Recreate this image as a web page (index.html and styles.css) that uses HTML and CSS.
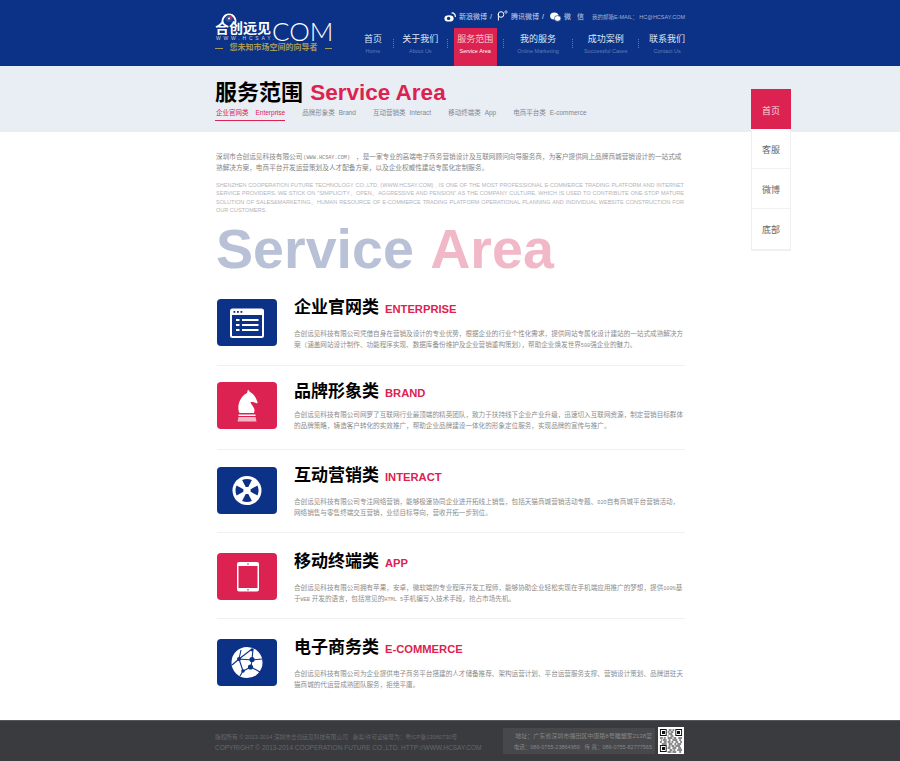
FILE: index.html
```html
<!DOCTYPE html>
<html lang="zh-CN">
<head>
  <meta charset="UTF-8" />
  <title>服务范围 Service Area</title>
  <link rel="stylesheet" href="styles.css">
</head>
<body>
  <header class="top">
    <div class="top-inner">
      <a class="logo">
        <svg class="logo-mark" width="20" height="12" viewBox="0 0 20 12">
          <path d="M4 11.500a6.500 6.500 0 1 1 12 0" fill="none" stroke="#fff" stroke-width="1.800"/>
          <circle cx="10" cy="6.500" r="3.600" fill="#2a4f9e"/>
          <path d="M10 3a3.500 3.500 0 0 1 3.500 3.500H10z" fill="#d9214f"/>
          <circle cx="10" cy="6.500" r="1" fill="#fff"/>
        </svg>
        <div class="logo-main"><span class="logo-cn">合创远见</span><span class="logo-com">COM</span></div>
        <div class="logo-url">WWW.HCSAY.</div>
        <div class="logo-slogan"><i></i>您未知市场空间的向导者<i></i></div>
      </a>
      <div class="top-right">
        <div class="top-links">
          <svg class="ic" width="12" height="10" viewBox="0 0 12 10"><ellipse cx="5" cy="6.400" rx="4.600" ry="3.200" fill="#fff"/><circle cx="4.600" cy="6.400" r="1.700" fill="#0b3286"/><path d="M7.500 1a3.400 3.400 0 0 1 3.800 4" fill="none" stroke="#fff" stroke-width="1.200"/></svg>
          <span class="tl-w">新浪微博</span><em>/</em>
          <svg class="ic ic-qq" width="11" height="11" viewBox="0 0 11 11"><circle cx="4" cy="4.500" r="2.800" fill="none" stroke="#fff"/><path d="M1.400 4v6.500" stroke="#fff"/><circle cx="9" cy="2" r="1.200" fill="none" stroke="#fff" stroke-width=".7"/></svg>
          <span class="tl-w">腾讯微博</span><em>/</em>
          <svg class="ic ic-wx" width="11" height="10" viewBox="0 0 11 10"><ellipse cx="4.300" cy="4" rx="4.200" ry="3.500" fill="#fff"/><ellipse cx="7.600" cy="6.400" rx="3.300" ry="2.800" fill="#fff" stroke="#0b3286" stroke-width=".6"/></svg>
          <span class="tl-wx">微 信</span>
          <span class="tl-mail">我的邮箱E-MAIL： HC@HCSAY.COM</span>
        </div>
        <nav class="nav">
          <a class="nav-item w40"><b>首页</b><small>Home</small></a><i class="sep"></i>
          <a class="nav-item w53"><b>关于我们</b><small>About Us</small></a><i class="sep"></i>
          <a class="nav-item w43 on"><b>服务范围</b><small>Service Area</small></a><i class="sep sep-r"></i>
          <a class="nav-item w69"><b>我的服务</b><small>Online Marketing</small></a><i class="sep"></i>
          <a class="nav-item w65"><b>成功案例</b><small>Successful Cases</small></a><i class="sep"></i>
          <a class="nav-item w56"><b>联系我们</b><small>Contact Us</small></a>
        </nav>
      </div>
    </div>
  </header>

  <section class="band">
    <div class="wrap">
      <h1 class="band-title">服务范围 <span>Service Area</span></h1>
      <ul class="sub">
        <li class="on">企业官网类<span>Enterprise</span></li>
        <li>品牌形象类<span class="s4">Brand</span></li>
        <li>互动营销类<span class="s4">Interact</span></li>
        <li>移动终端类<span class="s4">App</span></li>
        <li>电商平台类<span class="s4">E-commerce</span></li>
      </ul>
    </div>
  </section>

  <aside class="side">
    <a class="on">首页</a>
    <a>客服</a>
    <a>微博</a>
    <a>底部</a>
  </aside>

  <main class="wrap main">
    <p class="intro-cn">深圳市合创远见科技有限公司<span class="url">(WWW.HCSAY.COM)</span>，是一家专业的高端电子商务营销设计及互联网顾问向导服务商，为客户提供网上品牌商城营销设计的一站式成<br>熟解决方案，电商平台开发运营策划及人才配备方案，以及企业权威性建站专属化定制服务。</p>
    <p class="intro-en">
      <span>SHENZHEN COOPERATION FUTURE TECHNOLOGY CO.,LTD. (WWW.HCSAY.COM) , IS ONE OF THE MOST PROFESSIONAL E-COMMERCE TRADING PLATFORM AND INTERNET</span>
      <span>SERVICE PROVIDERS. WE STICK ON "SIMPLICITY、OPEN、AGGRESSIVE AND PENSION" AS THE COMPANY CULTURE, WHICH IS USED TO CONTRIBUTE ONE-STOP MATURE</span>
      <span>SOLUTION OF SALES&amp;MARKETING、HUMAN RESOURCE OF E-COMMERCE TRADING PLATFORM OPERATIONAL PLANNING AND INDIVIDUAL WEBSITE CONSTRUCTION FOR</span>
      <span class="last">OUR CUSTOMERS.</span>
    </p>
    <div class="big">Service <span>Area</span></div>

    <div class="svc">
      <div class="svc-icon blue">
        <svg width="60" height="47" viewBox="0 0 60 47"><rect x="14" y="10.500" width="32" height="27.500" rx="1.500" fill="none" stroke="#fff" stroke-width="2"/><rect x="14" y="10" width="32" height="6" fill="#fff"/><g fill="#0b3286"><rect x="16.500" y="12" width="1.800" height="1.800"/><rect x="20" y="12" width="1.800" height="1.800"/><rect x="23.500" y="12" width="1.800" height="1.800"/></g><g fill="#fff"><rect x="19" y="20" width="3.500" height="2"/><rect x="19" y="25" width="3.500" height="2"/><rect x="19" y="30" width="3.500" height="2"/><rect x="25" y="20" width="16.500" height="2"/><rect x="25" y="25" width="16.500" height="2"/><rect x="25" y="30" width="16.500" height="2"/></g></svg>
      </div>
      <div class="svc-body">
        <h2>企业官网类<span>ENTERPRISE</span></h2>
        <p>合创远见科技有限公司凭借自身在营销及设计的专业优势，根据企业的行业个性化需求，提供网站专属化设计建站的一站式成熟解决方<br>案（涵盖网站设计制作、功能程序实现、数据库备份维护及企业营销重构策划），帮助企业焕发世界<span class="num">500</span>强企业的魅力。</p>
      </div>
    </div>

    <div class="svc svc-brand">
      <div class="svc-icon red">
        <svg width="60" height="47" viewBox="0 0 60 47"><path d="M22.500 31c-1.500-3-1.500-7-.500-10 1-4 4-8 8-10l1-3.500 2 2.500c4 2 6 6 7.500 10 .3 1-.3 1.500-1 1.300l-3.500-1.300-2.500 0c.5 3 4 5 4 8 0 1-.2 2-.5 3z" fill="#fff"/><path d="M21.500 32.500h17v1.500h-17z" fill="#fff"/><path d="M21.500 35h17l1 4.500h-19z" fill="#f3b7c6"/></svg>
      </div>
      <div class="svc-body">
        <h2>品牌形象类<span>BRAND</span></h2>
        <p>合创远见科技有限公司网罗了互联网行业最顶端的精英团队，致力于扶持线下企业产业升级，迅速切入互联网资源，制定营销目标群体<br>的品牌策略，铸造客户转化的实效推广，帮助企业品牌建设一体化的形象定位服务，实现品牌的宣传与推广。</p>
      </div>
    </div>

    <div class="svc">
      <div class="svc-icon blue">
        <svg width="60" height="47" viewBox="0 0 60 47"><circle cx="30" cy="23.500" r="14.500" fill="#fff"/><g fill="#0b3286"><path d="M25.100 13.100A11.500 11.500 0 0 1 34.900 13.100L31.300 19.900H28.700Z"/><path d="M25.100 13.100A11.500 11.500 0 0 1 34.900 13.100L31.300 19.900H28.700Z" transform="rotate(90 30 23.500)"/><path d="M25.100 13.100A11.500 11.500 0 0 1 34.900 13.100L31.300 19.900H28.700Z" transform="rotate(180 30 23.500)"/><path d="M25.100 13.100A11.500 11.500 0 0 1 34.900 13.100L31.300 19.900H28.700Z" transform="rotate(270 30 23.500)"/></g></svg>
      </div>
      <div class="svc-body">
        <h2>互动营销类<span>INTERACT</span></h2>
        <p>合创远见科技有限公司专注网络营销，能够极速协同企业进开拓线上销售，包括天猫商城营销活动专题、<span class="num">O2O</span>自有商城平台营销活动，<br>网络销售与零售终端交互营销，业绩目标导向，营收开拓一步到位。</p>
      </div>
    </div>

    <div class="svc">
      <div class="svc-icon red">
        <svg width="60" height="47" viewBox="0 0 60 47"><rect x="20" y="9" width="22" height="29.500" rx="2" fill="#fff"/><rect x="21.500" y="13" width="19" height="22" fill="#dc2250"/><circle cx="31" cy="11" r=".8" fill="#dc2250"/><circle cx="31" cy="36.700" r=".8" fill="#dc2250"/></svg>
      </div>
      <div class="svc-body">
        <h2>移动终端类<span>APP</span></h2>
        <p>合创远见科技有限公司拥有苹果，安卓，微软端的专业程序开发工程师，能够协助企业轻松实现在手机端应用推广的梦想，提供<span class="num">100%</span>基<br>于<span class="num">WEB</span> 开发的语言，包括常见的<span class="num">HTML 5</span>手机编写入技术手段，抢占市场先机。</p>
      </div>
    </div>

    <div class="svc">
      <div class="svc-icon blue">
        <svg width="60" height="47" viewBox="0 0 60 47"><circle cx="30" cy="23.500" r="15.500" fill="#fff"/><g fill="none" stroke="#0b3286" stroke-width="1.100"><path d="M22 20l13-10M22 20l4 12M22 20l13 1M35 10l1 0M36 10l-1 11M35 21l-1 7M26 32l8-4M34 28l9 5M15 26l7-6M35 21l10-1M24 11l-2 9M26 32l-3 5"/></g><g fill="#0b3286"><circle cx="22" cy="20" r="2"/><circle cx="35" cy="20.500" r="2.600"/><circle cx="33.500" cy="28" r="2.600"/><circle cx="26" cy="32" r="1.800"/><circle cx="35" cy="11" r="1.400"/></g></svg>
      </div>
      <div class="svc-body">
        <h2>电子商务类<span>E-COMMERCE</span></h2>
        <p>合创远见科技有限公司为企业提供电子商务平台搭建的人才储备推荐、架构运营计划、平台运营服务支撑、营销设计策划、品牌进驻天<br>猫商城的代运营成熟团队服务，拒绝平庸。</p>
      </div>
    </div>
  </main>

  <footer class="foot">
    <div class="foot-inner">
      <div class="foot-left">
        <p class="foot-cn">版权所有 © 2013-2014 深圳市合创远见科技有限公司 &nbsp; 备案/许可证编号为：粤ICP备13060730号</p>
        <p class="foot-en">COPYRIGHT © 2013-2014 COOPERATION FUTURE CO.,LTD. HTTP://WWW.HCSAY.COM</p>
      </div>
      <div class="foot-contact">
        <p>地址：广东省深圳市福田区中康路8号雕塑家2138室</p>
        <p class="tel">电话：086-0755-23864959 &nbsp; 传 真：086-0755-82777565</p>
      </div>
      <svg class="qr" width="26" height="27" viewBox="0 0 27 27" preserveAspectRatio="none" shape-rendering="crispEdges">
        <rect width="27" height="27" fill="#fff"/>
        <g fill="none" stroke="#111">
          <rect x="2.500" y="2.500" width="6" height="6"/><rect x="18.500" y="2.500" width="6" height="6"/><rect x="2.500" y="18.500" width="6" height="6"/>
        </g>
        <g fill="#111">
          <rect x="4" y="4" width="3" height="3"/><rect x="20" y="4" width="3" height="3"/><rect x="4" y="20" width="3" height="3"/>
        </g>
        <path stroke="#111" d="M11 3h3M15 3h2M10 5h2M13 5h3M11 7h4M10 9h1M13 9h3M2 11h3M6 11h2M10 11h5M16 11h3M21 11h4M3 13h1M5 13h4M11 13h2M15 13h5M22 13h2M2 15h2M6 15h3M10 15h3M14 15h2M18 15h3M23 15h2M4 17h5M11 17h4M17 17h2M20 17h4M11 19h2M14 19h3M18 19h5M10 21h3M15 21h4M21 21h3M12 23h3M16 23h2M20 23h5M10 25h4M15 25h4M22 25h2"/>
      </svg>
    </div>
  </footer>
</body>
</html>
```

FILE: styles.css
```css
:root {
  --blue: #0b3286;
  --red: #dc2250;
  --band: #e9edf4;
  --dark: #3a3b3f;
}
* { margin: 0; padding: 0; box-sizing: border-box; }
body {
  background: #fff;
  color: #8a8a8a;
  font-family: 'Liberation Sans', 'Noto Sans CJK SC', sans-serif;
  position: relative;
  height: 761px;
  overflow: hidden;
}
.wrap { width: 470px; margin-left: 215px; }

/* header */
.top { background: var(--blue); height: 66px; }
.top-inner { display: flex; padding-left: 215px; }
.logo { display: block; width: 138px; padding-top: 12px; color: #fff; }
.logo-mark { display: block; margin-left: 4px; margin-bottom: -5px; }
.logo-main { display: flex; align-items: center; height: 23px; }
.logo-cn { font-size: 14px; font-weight: 700; width: 57px; white-space: nowrap; margin-top: -7px; }
.logo-com { font-family: 'Lato', sans-serif; font-weight: 300; font-size: 26px; }
.logo-url { font-size: 5px; letter-spacing: 2.800px; color: #c9d3e8; line-height: 5px; margin-top: -6px; padding-left: 1px; white-space: nowrap; }
.logo-slogan {
  display: flex;
  align-items: center;
  width: 117px;
  gap: 7px;
  color: #a9975a;
  font-size: 8px;
  font-weight: 700;
  line-height: 10px;
  margin-top: 2px;
  white-space: nowrap;
}
.logo-slogan i { flex: 1; height: 1px; background: #a9975a; }

.top-right { width: 342px; }
.top-links {
  height: 28px;
  padding: 12px 0 0 91px;
  display: flex;
  align-items: flex-start;
  font-size: 7px;
  line-height: 10px;
  color: #c6d1e6;
  white-space: nowrap;
}
.top-links .ic { display: block; margin-right: 3px; }
.top-links em { font-style: normal; width: 10px; text-align: center; margin-left: -1px; color: #dbe2f0; }
.ic-qq { margin-top: -2px; margin-left: 1px; }
.ic-wx { margin-left: 2px; }
.tl-w { width: 28px; }
.tl-wx { font-size: 7px; word-spacing: 4px; width: 28px; }
.tl-mail { font-size: 5.500px; color: #9fb0d2; }

.nav { display: flex; height: 38px; align-items: flex-start; }
.nav-item { display: block; text-align: center; padding-top: 6px; color: #dfe6f3; white-space: nowrap; }
.nav-item b { display: block; font-weight: 400; font-size: 9px; line-height: 11px; }
.nav-item small { display: block; font-size: 5.500px; line-height: 8px; margin-top: 2px; color: #5f7cb6; }
.nav-item.on { background: var(--red); height: 38px; margin-left: 6px; color: #f4c9d4; }
.nav-item.on small { color: #fff; }
.w40 { width: 40px; }
.w53 { width: 53px; }
.w43 { width: 43px; }
.w69 { width: 69px; }
.w65 { width: 65px; }
.w56 { width: 56px; }
.sep { display: block; width: 1px; height: 9px; margin-top: 11px; border-left: 1px dotted #5f7cb6; }
.sep-r { margin-left: 6px; }

/* title band */
.band { background: var(--band); height: 66px; }
.band .wrap { padding-top: 14px; }
.band-title {
  font-size: 22px;
  line-height: 26px;
  color: #000;
  white-space: nowrap;
}
.band-title span { color: var(--red); font-size: 22.500px; margin-left: 1px; }
.sub { display: flex; list-style: none; gap: 16px; font-size: 6.500px; line-height: 9px; color: #85888e; }
.sub li { padding: 2px 0 3px 1px; white-space: nowrap; }
.sub li span { margin-left: 7px; font-size: 6.500px; }
.sub li span.s4 { margin-left: 4px; }
.sub li.on { color: var(--red); border-bottom: 1px solid var(--red); }

/* right hand quick menu */
.side {
  position: absolute;
  left: 751px;
  top: 89px;
  width: 40px;
  background: #fff;
  border: 1px solid #eeeff2;
  border-top: 0;
  font-size: 9px;
  color: #666;
}
.side a { display: block; height: 40px; line-height: 42px; text-align: center; border-bottom: 1px solid #f1f1f3; }
.side a:last-child { height: 41px; }
.side a.on { background: var(--red); color: #fbdde4; height: 40px; margin: 0 -1px; line-height: 44px; border: 0; }

/* content */
.main { height: 588px; padding: 19px 0 0 1px; }
.intro-cn { font-size: 6.650px; line-height: 11px; color: #858585; white-space: nowrap; }
.url { font-family: 'Liberation Mono', monospace; font-size: 5.200px; line-height: 0; margin: 0 6px 0 1px; }
.intro-en { font-size: 5.550px; line-height: 8.350px; color: #b3b5ba; margin-top: 8px; width: 468px; }
.intro-en span { display: block; white-space: nowrap; text-align: justify; text-align-last: justify; }
.intro-en span.last { text-align-last: left; }
.big {
  font-size: 55.600px;
  font-weight: 700;
  line-height: 57px;
  word-spacing: 3px;
  color: #b9c1d7;
  margin-top: 7px;
  white-space: nowrap;
}
.big span { color: #f1b9c8; }

.svc { display: flex; gap: 17px; margin-left: 1px; padding-bottom: 19px; margin-bottom: 16px; border-bottom: 1px solid #eff0f2; }
.big + .svc { margin-top: 21px; }
.big ~ .svc:nth-of-type(3) { padding-bottom: 20px; margin-bottom: 17px; }
.big ~ .svc:nth-of-type(4), .big ~ .svc:nth-of-type(5) { padding-bottom: 18px; margin-bottom: 20px; }
.svc:last-child { border-bottom: 0; margin-bottom: 0; }
.svc-icon { width: 60px; height: 47px; flex: none; border-radius: 4px; }
.svc-icon svg { display: block; }
.svc-icon.blue { background: var(--blue); }
.svc-icon.red { background: var(--red); }
.svc-body { width: 391px; height: 47px; }
.svc-body h2 { font-size: 17px; line-height: 18px; color: #000; white-space: nowrap; }
.svc-body h2 span { font-size: 11.200px; color: var(--red); margin-left: 6px; }
.svc-body p { font-size: 6.600px; line-height: 11px; color: #8c8c8c; margin-top: 10px; white-space: nowrap; }
.num { font-family: 'Liberation Mono', monospace; font-size: 5.200px; line-height: 0; }
.svc-brand h2 { padding-top: 1px; }
.svc-brand .svc-body p { margin-top: 7px; }

/* footer */
.foot { background: var(--dark); height: 41px; border-top: 1px solid #55565a; }
.foot-inner { display: flex; align-items: flex-start; padding-left: 215px; width: 685px; padding-top: 6px; }
.foot-left { width: 288px; padding-top: 5px; white-space: nowrap; color: #66676b; }
.foot-cn { font-size: 5.700px; line-height: 10px; }
.foot-en { font-size: 6.500px; line-height: 10px; margin-top: 1px; }
.foot-contact {
  width: 152px;
  height: 26px;
  margin-top: 1px;
  margin-right: 3px;
  padding: 3px 3px 0 0;
  background: #47484c;
  color: #85868a;
  font-size: 6px;
  line-height: 11px;
  text-align: right;
  white-space: nowrap;
}
.foot-contact .tel { font-size: 5.500px; }
.qr { display: block; }
```
